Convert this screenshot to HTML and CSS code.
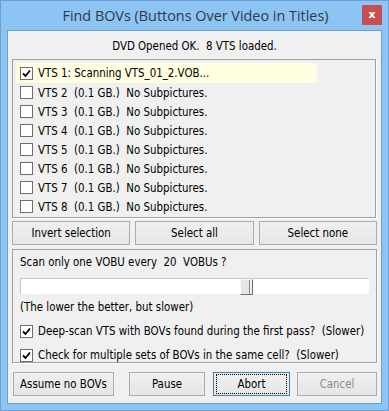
FILE: index.html
```html
<!DOCTYPE html>
<html>
<head>
<meta charset="utf-8">
<link rel="stylesheet" href="styles.css">
</head>
<body>
<div class="window">
  <div class="titlebar">
    <div class="title">Find BOVs (Buttons Over Video in Titles)</div>
    <div class="close">x</div>
  </div>
  <div class="client">
    <div class="status">DVD Opened OK.&nbsp; 8 VTS loaded.</div>
    <div class="listbox">
      <div class="item active"><span class="cb checked"><svg viewBox="0 0 11 11" width="11" height="11"><polyline points="2,5.5 4.5,8 9,2.5" fill="none" stroke="#000" stroke-width="1.8"/></svg></span><span>VTS 1: Scanning VTS_01_2.VOB...</span></div>
      <div class="item"><span class="cb"></span><span>VTS 2&nbsp; (0.1 GB.)&nbsp; No Subpictures.</span></div>
      <div class="item"><span class="cb"></span><span>VTS 3&nbsp; (0.1 GB.)&nbsp; No Subpictures.</span></div>
      <div class="item"><span class="cb"></span><span>VTS 4&nbsp; (0.1 GB.)&nbsp; No Subpictures.</span></div>
      <div class="item"><span class="cb"></span><span>VTS 5&nbsp; (0.1 GB.)&nbsp; No Subpictures.</span></div>
      <div class="item"><span class="cb"></span><span>VTS 6&nbsp; (0.1 GB.)&nbsp; No Subpictures.</span></div>
      <div class="item"><span class="cb"></span><span>VTS 7&nbsp; (0.1 GB.)&nbsp; No Subpictures.</span></div>
      <div class="item"><span class="cb"></span><span>VTS 8&nbsp; (0.1 GB.)&nbsp; No Subpictures.</span></div>
    </div>
    <div class="selrow">
      <button class="btn">Invert selection</button>
      <button class="btn">Select all</button>
      <button class="btn">Select none</button>
    </div>
    <div class="group">
      <div class="glabel">Scan only one VOBU every&nbsp; 20&nbsp; VOBUs ?</div>
      <div class="track"><div class="thumb"></div></div>
      <div class="note">(The lower the better, but slower)</div>
      <div class="opt"><span class="cb checked"><svg viewBox="0 0 11 11" width="11" height="11"><polyline points="2,5.5 4.5,8 9,2.5" fill="none" stroke="#000" stroke-width="1.8"/></svg></span><span>Deep-scan VTS with BOVs found during the first pass?&nbsp; (Slower)</span></div>
      <div class="opt opt2"><span class="cb checked"><svg viewBox="0 0 11 11" width="11" height="11"><polyline points="2,5.5 4.5,8 9,2.5" fill="none" stroke="#000" stroke-width="1.8"/></svg></span><span>Check for multiple sets of BOVs in the same cell?&nbsp; (Slower)</span></div>
    </div>
    <div class="bottom">
      <button class="btn b-assume">Assume no BOVs</button>
      <button class="btn b-pause">Pause</button>
      <button class="btn b-abort"><span class="focus">Abort</span></button>
      <button class="btn b-cancel" disabled>Cancel</button>
    </div>
  </div>
</div>
</body>
</html>
```
FILE: styles.css
```css
* { box-sizing: border-box; }
html, body { margin: 0; padding: 0; background: #8ec5f3; }
body { width: 389px; height: 411px; overflow: hidden; }
.window {
  width: 389px; height: 411px;
  background: #8cc4f4;
  border: 1px solid #6c9fd6;
  display: flex; flex-direction: column;
  padding: 0 6px 6px 6px;
}
.titlebar {
  height: 29px; flex: none;
  display: flex; align-items: center; justify-content: center;
  position: relative;
}
.title {
  font-family: "Open Sans", "Noto Sans", sans-serif;
  font-size: 14.4px; color: #2f3a44;
  margin-top: 0px; margin-left: 2px;
}
.close {
  position: absolute; right: 0; top: 4px;
  width: 20px; height: 20px;
  background: #c75050; color: #fff;
  font-family: "DejaVu Sans", sans-serif; font-weight: bold; font-size: 11px;
  display: flex; align-items: center; justify-content: center;
  padding-bottom: 2px;
}
.client {
  flex: 1;
  background: #f0f0f0;
  border: 1px solid #6f9fd1;
  font-family: "DejaVu Sans Condensed", "DejaVu Sans", sans-serif;
  font-stretch: condensed;
  font-size: 11.4px; color: #000;
  padding: 0 4px 0 4px;
  display: flex; flex-direction: column;
}
.status { text-align: center; height: 28px; line-height: 16px; padding-top: 7px; }
.listbox {
  border: 1px solid #a0a0a0;
  box-shadow: 1px 1px 0 #fff;
  height: 159px;
  padding: 3px 0 0 3px;
  margin-right: 1px;
}
.item {
  display: flex; align-items: center;
  height: 19px; width: 301px;
  padding-left: 4px; gap: 5px;
  white-space: nowrap;
}
.item.active { background: #fffee0; height: 20px; }
.cb {
  width: 13px; height: 13px; flex: none;
  border: 1px solid #6e6e6e; background: #fff;
  display: flex; align-items: center; justify-content: center;
}
.selrow { display: flex; gap: 5px; margin-top: 3px; }
.btn {
  font-family: "DejaVu Sans Condensed", "DejaVu Sans", sans-serif;
  font-stretch: condensed;
  font-size: 11.4px; color: #000;
  height: 24px;
  border: 1px solid #acacac;
  background: linear-gradient(#f0f0f0, #e6e6e6);
  padding: 0;
  display: flex; align-items: center; justify-content: center;
}
.selrow .btn { flex: 1; }
.group {
  margin-top: 4px; height: 114px;
  border: 1px solid #a0a0a0; box-shadow: 1px 1px 0 #fff;
  padding: 4px 7px 0 7px;
}
.glabel { height: 17px; line-height: 16px; }
.track {
  height: 16px; margin-top: 7px; margin-right: 0;
  background: #fff;
  border-top: 1px solid #c8c8c8; border-left: 1px solid #c8c8c8;
  position: relative;
}
.thumb {
  position: absolute; left: 219px; top: 0; width: 13px; height: 16px;
  background: #e6e6e6;
  border: 1px solid #707070; border-top-color: #f8f8f8; border-left-color: #f8f8f8;
  box-shadow: inset -2px 0 0 #f0f0f0, inset -3px 0 0 #8c8c8c;
}
.note { margin-top: 5px; height: 16px; line-height: 16px; }
.opt { display: flex; align-items: center; gap: 5px; margin-top: 8px; height: 16px; white-space: nowrap; }
.opt2 { margin-top: 8px; }
.bottom { display: flex; margin-top: 9px; }
.bottom .btn { height: 24px; }
.b-assume { width: 101px; margin-left: 1px; }
.b-pause { width: 76px; margin-left: 15px; }
.b-abort { width: 77px; margin-left: 8px; border-color: #3c7fb1; }
.b-cancel { width: 80px; margin-left: 7px; color: #8d8d8d; }
.focus { outline: 1px dotted #000; outline-offset: 0; padding: 2px 20px; }
```
